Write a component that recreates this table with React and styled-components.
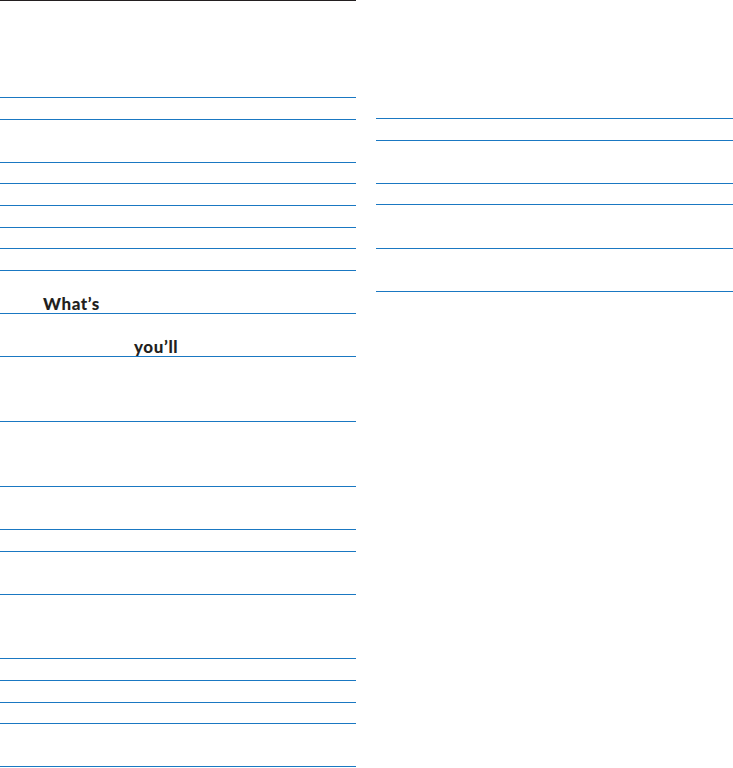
import React from 'react';
import styled, { createGlobalStyle } from 'styled-components';

const GlobalStyle = createGlobalStyle`
  html, body {
    margin: 0;
    padding: 0;
    background: #fff;
  }
  body {
    font-family: 'Lato', 'Liberation Sans', sans-serif;
    color: #231f20;
  }
`;

const UNIT = 21.6;

const Page = styled.div`
  display: grid;
  grid-template-columns: 356px 357px;
  column-gap: 20px;
  width: 733px;
  height: 768px;
  overflow: hidden;
`;

const Column = styled.div`
  display: flex;
  flex-direction: column;
  padding-top: ${(p) => p.$offset}px;
  border-top: ${(p) => (p.$rule ? '1px solid #231f20' : 'none')};
`;

const Table = styled.div`
  display: flex;
  flex-direction: column;
  border-top: 1.5px solid #1a78c2;
`;

const Row = styled.div`
  box-sizing: border-box;
  height: ${(p) => p.$units * UNIT}px;
  border-bottom: 1.5px solid #1a78c2;
  display: flex;
  align-items: flex-end;
  padding-left: ${(p) => p.$indent || 0}px;
`;

const Word = styled.span`
  font-size: 17px;
  font-weight: 900;
  line-height: 1.2;
  letter-spacing: 0.6px;
  margin-bottom: -1px;
  color: #231f20;
`;

const leftRows = [
  { units: 1 },
  { units: 2 },
  { units: 1 },
  { units: 1 },
  { units: 1 },
  { units: 1 },
  { units: 1 },
  { units: 2, text: 'What’s', indent: 43 },
  { units: 2, text: 'you’ll', indent: 134 },
  { units: 3 },
  { units: 3 },
  { units: 2 },
  { units: 1 },
  { units: 2 },
  { units: 3 },
  { units: 1 },
  { units: 1 },
  { units: 1 },
  { units: 2 },
];

const rightRows = [
  { units: 1 },
  { units: 2 },
  { units: 1 },
  { units: 2 },
  { units: 2 },
];

const RuledTable = ({ rows }) => (
  <Table>
    {rows.map((row, i) => (
      <Row key={i} $units={row.units} $indent={row.indent}>
        {row.text && <Word>{row.text}</Word>}
      </Row>
    ))}
  </Table>
);

const App = () => (
  <>
    <GlobalStyle />
    <Page>
      <Column $rule $offset={96}>
        <RuledTable rows={leftRows} />
      </Column>
      <Column $offset={118}>
        <RuledTable rows={rightRows} />
      </Column>
    </Page>
  </>
);

export default App;
